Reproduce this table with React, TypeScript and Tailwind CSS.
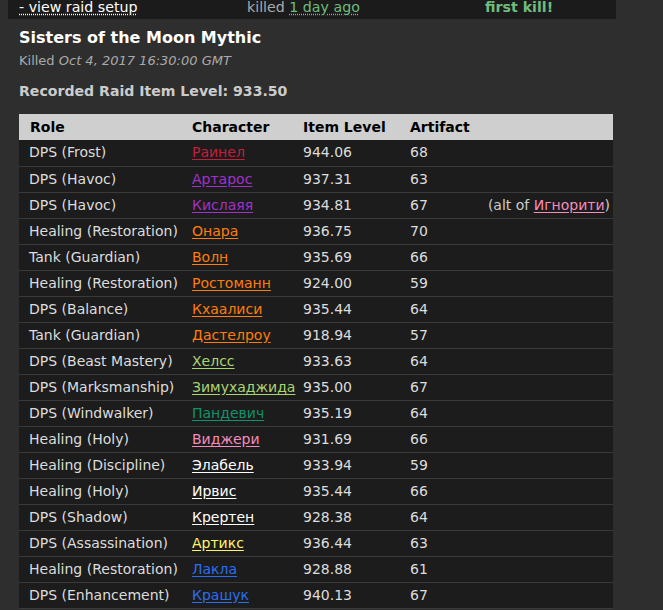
import * as React from "react";

type Row = { role: string; name: string; color: string; ilvl: string; art: string; alt?: string };

const rows: Row[] = [
  { role: "DPS (Frost)", name: "Раинел", color: "text-[#c41e3a]", ilvl: "944.06", art: "68" },
  { role: "DPS (Havoc)", name: "Артарос", color: "text-[#a330c9]", ilvl: "937.31", art: "63" },
  { role: "DPS (Havoc)", name: "Кислаяя", color: "text-[#a330c9]", ilvl: "934.81", art: "67", alt: "Игнорити" },
  { role: "Healing (Restoration)", name: "Онара", color: "text-[#ff7d0a]", ilvl: "936.75", art: "70" },
  { role: "Tank (Guardian)", name: "Волн", color: "text-[#ff7d0a]", ilvl: "935.69", art: "66" },
  { role: "Healing (Restoration)", name: "Ростоманн", color: "text-[#ff7d0a]", ilvl: "924.00", art: "59" },
  { role: "DPS (Balance)", name: "Кхаалиси", color: "text-[#ff7d0a]", ilvl: "935.44", art: "64" },
  { role: "Tank (Guardian)", name: "Дастелроу", color: "text-[#ff7d0a]", ilvl: "918.94", art: "57" },
  { role: "DPS (Beast Mastery)", name: "Хелсс", color: "text-[#abd473]", ilvl: "933.63", art: "64" },
  { role: "DPS (Marksmanship)", name: "Зимухаджида", color: "text-[#abd473]", ilvl: "935.00", art: "67" },
  { role: "DPS (Windwalker)", name: "Пандевич", color: "text-[#10936a]", ilvl: "935.19", art: "64" },
  { role: "Healing (Holy)", name: "Виджери", color: "text-[#f58cba]", ilvl: "931.69", art: "66" },
  { role: "Healing (Discipline)", name: "Элабель", color: "text-white", ilvl: "933.94", art: "59" },
  { role: "Healing (Holy)", name: "Ирвис", color: "text-white", ilvl: "935.44", art: "66" },
  { role: "DPS (Shadow)", name: "Крертен", color: "text-white", ilvl: "928.38", art: "64" },
  { role: "DPS (Assassination)", name: "Артикс", color: "text-[#fff569]", ilvl: "936.44", art: "63" },
  { role: "Healing (Restoration)", name: "Лакла", color: "text-[#2a6ff0]", ilvl: "928.88", art: "61" },
  { role: "DPS (Enhancement)", name: "Крашук", color: "text-[#2a6ff0]", ilvl: "940.13", art: "67" },
];

export default function App() {
  return (
    <div className="min-h-[610px] bg-[#2e2e2e] text-[#ccc]" style={{ fontFamily: "'DejaVu Sans', Verdana, sans-serif" }}>
      <div className="ml-2 flex h-[19px] w-[608px] items-start bg-[#1b1b1b] text-[14.2px] leading-[15px]">
        <span className="ml-[11px] w-[228px] text-white underline decoration-dotted underline-offset-2">- view raid setup</span>
        <span className="w-[238px] text-[#aaa]">
          killed <span className="text-[#6ebd7d] underline decoration-dotted underline-offset-2">1 day ago</span>
        </span>
        <span className="font-bold text-[#6ebd7d]">first kill!</span>
      </div>

      <div className="ml-[19px] pt-[8px]">
        <h1 className="text-[16px] font-bold leading-[21px] text-white">Sisters of the Moon Mythic</h1>
        <p className="mt-[3px] text-[13px] leading-[19px] text-[#aaa]">
          Killed <i>Oct 4, 2017 16:30:00 GMT</i>
        </p>
        <p className="mt-[12px] text-[14.1px] font-bold leading-[18px] text-[#ccc]">Recorded Raid Item Level: 933.50</p>

        <table className="mt-[14px] w-[594px] border-collapse text-[14px] text-[#ddd]">
          <thead>
            <tr className="h-[26px] bg-[#cfcfcf] text-left text-black">
              <th className="w-[173px] pl-[11px] font-bold">Role</th>
              <th className="w-[111px] font-bold">Character</th>
              <th className="w-[107px] font-bold">Item Level</th>
              <th className="font-bold">Artifact</th>
              <th />
            </tr>
          </thead>
          <tbody>
            {rows.map((r, i) => (
              <tr key={i} className="h-[26px] border-b border-[#3a3a3a] bg-[#1c1c1c]">
                <td className="pl-[10px] whitespace-nowrap">{r.role}</td>
                <td className="whitespace-nowrap">
                  <span className={`${r.color} underline underline-offset-2`}>{r.name}</span>
                </td>
                <td>{r.ilvl}</td>
                <td>{r.art}</td>
                <td className="pr-[3px] text-right whitespace-nowrap text-[#ccc]">
                  {r.alt && (
                    <>
                      (alt of <span className="text-[#f58cba] underline underline-offset-2">{r.alt}</span>)
                    </>
                  )}
                </td>
              </tr>
            ))}
          </tbody>
        </table>
      </div>
    </div>
  );
}
